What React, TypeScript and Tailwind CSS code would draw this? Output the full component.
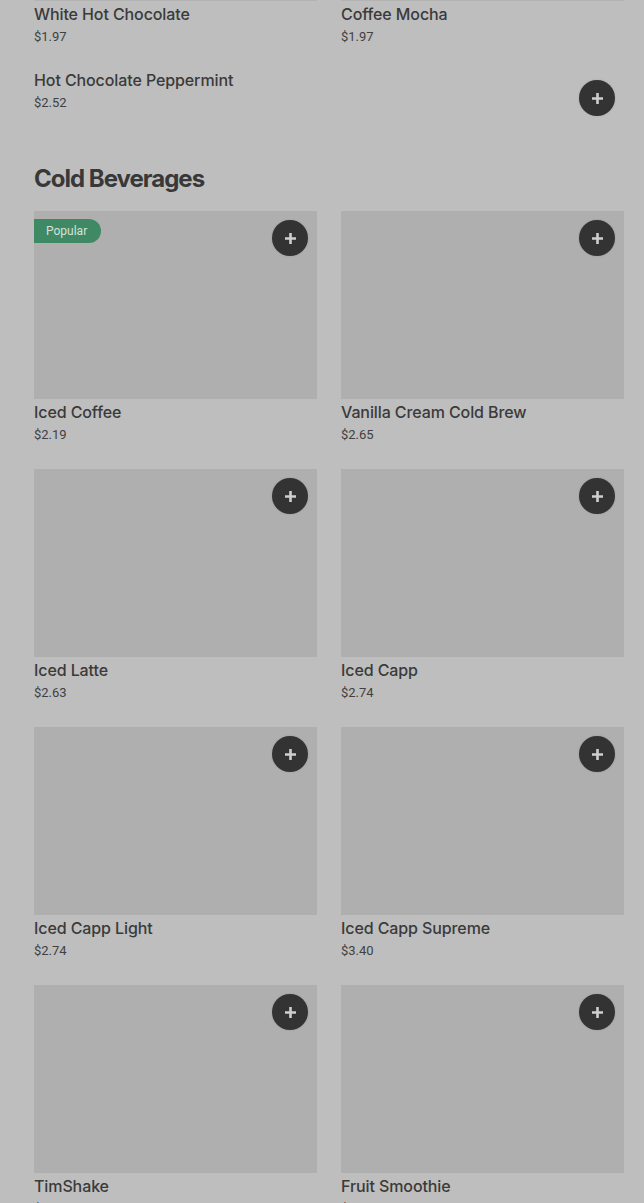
import React from "react";

type Item = { name: string; price: string; popular?: boolean };

const cold: Item[] = [
  { name: "Iced Coffee", price: "$2.19", popular: true },
  { name: "Vanilla Cream Cold Brew", price: "$2.65" },
  { name: "Iced Latte", price: "$2.63" },
  { name: "Iced Capp", price: "$2.74" },
  { name: "Iced Capp Light", price: "$2.74" },
  { name: "Iced Capp Supreme", price: "$3.40" },
  { name: "TimShake", price: "$3.79" },
  { name: "Fruit Smoothie", price: "$3.29" },
];

const AddButton = () => (
  <button className="w-9 h-9 rounded-full bg-[#333333] flex items-center justify-center shadow-[0_0_2px_rgba(0,0,0,0.15)]">
    <svg width="13" height="13" viewBox="0 0 13 13">
      <path d="M6.5 1v11M1 6.5h11" stroke="#cfcfcf" strokeWidth="2.6" />
    </svg>
  </button>
);

const Info = ({ item }: { item: Item }) => (
  <div>
    <p className="mt-px text-[16px] leading-6 font-medium text-[#3a3a3a] font-['Inter',sans-serif] tracking-[-0.1px]">
      {item.name}
    </p>
    <p className="text-[13px] leading-[22px] text-[#414141] font-['Roboto',sans-serif]">{item.price}</p>
  </div>
);

const Card = ({ item }: { item: Item }) => (
  <div>
    <div className="relative h-[188px] bg-[#afafaf]">
      {item.popular && (
        <span className="absolute left-0 top-2 h-6 pl-3 pr-[14px] rounded-r-full bg-[#3f8a65] text-[#d3e3da] text-[12px] leading-6 font-['Roboto',sans-serif]">
          Popular
        </span>
      )}
      <div className="absolute right-[9px] top-[9px]">
        <AddButton />
      </div>
    </div>
    <Info item={item} />
  </div>
);

export default function App() {
  return (
    <div className="min-h-screen bg-[#bebebe] pl-[34px] pr-[20px] overflow-hidden">
      <div className="grid grid-cols-2 gap-x-6">
        <div>
          <div className="h-px bg-[#b3b3b3]" />
          <Info item={{ name: "White Hot Chocolate", price: "$1.97" }} />
        </div>
        <div>
          <div className="h-px bg-[#b3b3b3]" />
          <Info item={{ name: "Coffee Mocha", price: "$1.97" }} />
        </div>
      </div>

      <div className="mt-[19px] flex items-end justify-between pr-[9px]">
        <Info item={{ name: "Hot Chocolate Peppermint", price: "$2.52" }} />
        <div className="-mb-[2px]">
          <AddButton />
        </div>
      </div>

      <h2 className="mt-[51px] text-[24px] leading-7 font-bold text-[#383838] font-['Inter',sans-serif] tracking-[-1px]">
        Cold Beverages
      </h2>

      <div className="mt-[18px] grid grid-cols-2 gap-x-6 gap-y-[23px]">
        {cold.map((it) => (
          <Card key={it.name} item={it} />
        ))}
      </div>
    </div>
  );
}
